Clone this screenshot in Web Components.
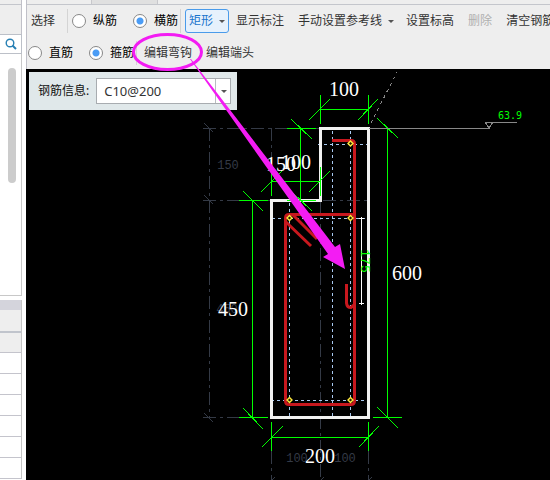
<!DOCTYPE html>
<html lang="zh-CN">
<head>
<meta charset="utf-8">
<title>钢筋编辑</title>
<style>
  html, body { margin: 0; height: 100%; }
  body { font: 12px/16px "Noto Sans", "Noto Sans CJK SC", sans-serif; color: #333; overflow: hidden; background: #fff; }
</style>
</head>
<body>
<rebar-app></rebar-app>
<script>
const define = (name, markup) => {
  const template = document.createElement('template');
  template.innerHTML = markup;
  customElements.define(name, class extends HTMLElement {
    constructor() {
      super();
      this.attachShadow({ mode: 'open' }).append(template.content.cloneNode(true));
    }
    connectedCallback() {
      const root = this.shadowRoot;
      const input = root.querySelector('input[type=radio]');
      if (input) input.checked = this.hasAttribute('checked');
      const button = root.querySelector('button');
      if (button && name === 'tool-button') button.disabled = this.hasAttribute('disabled');
    }
  });
};

define('tool-button', `
<style>
  :host { display: block; flex: none; }
  button { display: flex; align-items: center; gap: 6px; height: 24px; padding: 0; border: 0; background: none; font: inherit; color: #333; white-space: nowrap; }
  button:disabled { color: #b0b0b0; }
  i { display: none; border: 3px solid transparent; border-top-color: #555; border-bottom: 0; }
  :host([menu]) i { display: block; }
  :host([active]) button { color: #1874cd; background: #e6f1fc; border: 1px solid #4a9bea; border-radius: 3px; padding: 0 3px; }
</style>
<button type="button"><slot></slot><i></i></button>`);

define('tool-radio', `
<style>
  :host { display: block; flex: none; }
  label { display: flex; align-items: center; gap: 7px; color: #000; white-space: nowrap; }
  input { appearance: none; box-sizing: border-box; width: 14px; height: 14px; margin: 0; border: 1px solid #888; border-radius: 50%; background: #fff; }
  input:checked { background: radial-gradient(circle, #4a9cf5 0 3px, #fff 4px); }
</style>
<label><input type="radio"><span><slot></slot></span></label>`);

define('tool-divider', `
<style>:host { display: block; flex: none; width: 1px; height: 24px; background: #d4d4d4; }</style>`);

define('tool-bar', `
<style>
  :host { display: block; background: #eee; border-left: 1px solid #c0c0c8; height: 69px; overflow: hidden; }
  .tabs { height: 4px; border-bottom: 1px solid #c4c6cc; display: flex; }
  .tabs span { width: 65px; margin-left: 64px; background: #e0e0e0; border: 1px solid #c8c8cc; border-width: 0 1px; }
  .row { display: flex; align-items: center; height: 32px; }
  .first { padding-left: 4px; }
  .second { padding-left: 1px; }
  .g { margin-left: 14px; }
  .m { margin-left: 12px; }
  .s { margin-left: 4px; }
  .r { margin-left: 16px; }
  .t { margin-left: 2px; }
  .l { margin-left: 8px; }
  .k { margin-left: 7px; }
</style>
<div class="tabs"><span></span></div>
<div class="row first">
  <tool-button>选择</tool-button>
  <tool-divider class="m"></tool-divider>
  <tool-radio class="s">纵筋</tool-radio>
  <tool-radio class="r" checked>横筋</tool-radio>
  <tool-divider class="t"></tool-divider>
  <tool-button class="s" active menu>矩形</tool-button>
  <tool-button class="k">显示标注</tool-button>
  <tool-button class="g" menu>手动设置参考线</tool-button>
  <tool-button class="m">设置标高</tool-button>
  <tool-button class="g" disabled>删除</tool-button>
  <tool-button class="g">清空钢筋</tool-button>
</div>
<div class="row second">
  <tool-radio>直筋</tool-radio>
  <tool-radio class="r" checked>箍筋</tool-radio>
  <tool-divider class="t"></tool-divider>
  <tool-button class="k">编辑弯钩</tool-button>
  <tool-button class="g">编辑端头</tool-button>
</div>`);

define('side-panel', `
<style>
  :host { display: flex; flex-direction: column; width: 22px; margin-right: 4px; overflow: hidden; }
  :host > * { flex: none; }
  .top { background: #eee; border-right: 1px solid #c0c0c8; height: 34px; box-sizing: border-box; }
  .top::before { content: ""; display: block; height: 4px; border-bottom: 1px solid #c4c6cc; }
  .search { display: flex; align-items: center; justify-content: center; height: 20px; box-sizing: border-box; padding: 0; border: 1px solid #bcc0c8; border-left: 0; background: #fff; width: 100%; }
  .list { height: 242px; box-sizing: border-box; border: 1px solid #c8c8c8; border-left: 0; border-top: 0; padding: 14px 5px 0 8px; }
  .thumb { height: 115px; border-radius: 4px; background: #ccc; }
  table { border-collapse: separate; border-spacing: 0; margin-top: 4px; width: 100%; }
  td, th { padding: 0; box-sizing: border-box; height: 21px; border-bottom: 1px solid #c4c4cc; border-right: 1px solid #c4c4c4; }
  th { background: #eee; }
  .cap th { height: 10px; background: #d4d4dc; border-bottom: 0; }
  .one th { height: 23px; border-bottom: 2px solid #c0c4cc; }
  .two th { height: 20px; }
</style>
<div class="top"></div>
<button class="search" type="button" aria-label="搜索"><svg width="12" height="12" viewBox="0 0 12 12" fill="none" stroke="#2880b4"><circle cx="5" cy="5" r="3.8" stroke-width="1.4"/><path d="M7.5 7.5L11 11" stroke-width="2"/></svg></button>
<div class="list"><div class="thumb"></div></div>
<table>
  <thead><tr class="cap"><th></th></tr><tr class="one"><th></th></tr><tr class="two"><th></th></tr></thead>
  <tbody><tr><td></td></tr><tr><td></td></tr><tr><td></td></tr><tr><td></td></tr><tr><td></td></tr><tr><td></td></tr></tbody>
</table>`);

define('rebar-info', `
<style>
  :host { display: flex; align-items: center; gap: 7px; background: #e0e8ea; padding: 6px 6px 6px 9px; color: #111; }
  label { flex: none; }
  .combo { position: relative; display: grid; }
  select { appearance: none; box-sizing: border-box; width: 135px; height: 26px; margin: 0; padding: 0 16px 0 7px; border: 1px solid #a8acb0; border-radius: 0; color: #333; font: 13px/16px "Noto Sans", sans-serif;
    background: linear-gradient(#b8bcc0, #b8bcc0) right 14px top / 1px 100% no-repeat #fff; }
  i { position: absolute; right: 4px; top: 12px; border: 3px solid transparent; border-top-color: #555; border-bottom: 0; pointer-events: none; }
</style>
<label for="spec">钢筋信息:</label>
<div class="combo"><select id="spec" aria-label="钢筋信息"><option>C10@200</option></select><i></i></div>`);

define('section-drawing', `
<style>
  :host { display: block; }
  svg { display: block; }
  .crisp { shape-rendering: crispEdges; }
  .big { font: 20px "Liberation Serif", serif; fill: #fff; text-anchor: middle; }
  .ghost { font: 12px "Liberation Mono", monospace; fill: #343a46; text-anchor: middle; }
  .level { font: 10px "DejaVu Sans Mono", monospace; fill: #00ff00; }
  .turn { font: 13px "Liberation Mono", monospace; fill: #00ff00; text-anchor: middle; }
</style>
<svg width="524" height="411" viewBox="26 69 524 411" fill="none" role="img" aria-label="截面配筋图">
  <g class="crisp" stroke="#343a46" stroke-dasharray="13 4 3 4">
    <path d="M209.500 128V418M203 128.500H320M203 200.500H369M203 417.500H240M271.500 128V200M320.500 200V480M271.500 451V480M368.500 451V480"/>
    <path stroke-dasharray="none" d="M204 123l9 9M204 195l9 9M204 413l9 9M272 480l3-3M321 480l3-3M369 480l3-3"/>
  </g>
  <text class="ghost" x="228" y="169">150</text>
  <text class="ghost" x="227" y="313">450</text>
  <text class="ghost" x="297" y="462">100</text>
  <text class="ghost" x="345" y="462">100</text>
  <g class="crisp" stroke="#a8c8f0" stroke-dasharray="3 3">
    <path d="M332.500 131V417M350.500 131V417M289.500 203V417M318 144.500H369M272 218.500H370M271 400.500H368"/>
  </g>
  <path class="crisp" stroke="#f2f2f2" stroke-width="3" d="M320.500 128.500H368.500V417.500H271.500V200.500H320.500Z"/>
  <g class="crisp" stroke="#00ff00">
    <path d="M320 109.500H369M320.500 95V124M368.500 95V124M300.500 128V201M287 128.500H316M287 200.500H316M271 181.500H321M271.500 167V196M320.500 167V196M252.500 200V418M239 200.500H268M239 417.500H268M271 437.500H369M271.500 422V451M368.500 422V451M387.500 128V418M373 417.500H402"/>
    <path d="M309 120l21-21M358 120l20-21M291 119l21 20M291 191l21 20M261 192l21-21M309 192l21-21M243 191l20 20M243 408l20 21M262 447l21-21M359 447l20-21M377 407l21 21M377 118l21 20"/>
  </g>
  <path class="crisp" stroke="#888" d="M369 128.500H490M485 122.500H517M485 122l4 6 4-6"/>
  <path class="crisp" stroke="#888" stroke-dasharray="3 4" d="M371 123L397 72"/>
  <text class="level" x="498" y="119">63.9</text>
  <g stroke="#c8181e" stroke-width="3">
    <path d="M332 140.500H351Q354.500 140.500 354.500 144V401Q354.500 404.500 351 404.500H289Q285.500 404.500 285.500 401V218Q285.500 214.500 289 214.500H354M286 222L311 246M293 215L317 239M346.500 284V303Q347 307.500 351 307.500L354 305"/>
  </g>
  <g stroke="#ffe93c" stroke-width="1.400" fill="#221c00">
    <path d="M350.500 141l2.500 2.500-2.500 2.500-2.500-2.500zM289.500 215.500l2.500 2.500-2.500 2.500-2.500-2.500zM350.500 215.500l2.500 2.500-2.500 2.500-2.500-2.500zM289.500 397.500l2.500 2.500-2.500 2.500-2.500-2.500zM350.500 397.500l2.500 2.500-2.500 2.500-2.500-2.500z"/>
  </g>
  <path class="crisp" stroke="#fff" d="M361.500 217V305M359 218.500H364M359 303.500H364"/>
  <text class="turn" transform="translate(361 261) rotate(90)">175</text>
  <text class="big" x="344" y="96">100</text>
  <text class="big" x="281" y="171">150</text>
  <text class="big" x="296" y="169">100</text>
  <text class="big" x="407" y="280">600</text>
  <text class="big" x="233" y="316">450</text>
  <text class="big" x="320" y="463">200</text>
</svg>`);

define('callout-arrow', `
<style>
  :host { position: absolute; left: 0; top: 0; pointer-events: none; }
  svg { display: block; }
</style>
<svg width="550" height="480" viewBox="0 0 550 480" aria-hidden="true">
  <ellipse cx="167.500" cy="52" rx="34" ry="17.500" fill="none" stroke="#f31cf3" stroke-width="3"/>
  <path fill="#f31cf3" d="M190 59L191 59L335 247L340 244L345 269L323 257L328 254Z"/>
</svg>`);

define('rebar-app', `
<style>
  :host { display: flex; position: relative; height: 100vh; overflow: hidden; }
  side-panel { flex: none; }
  main { flex: 1; min-width: 0; display: flex; flex-direction: column; }
  tool-bar { flex: none; }
  .canvas { position: relative; flex: 1; min-height: 0; background: #000; overflow: hidden; }
  rebar-info { position: absolute; left: 3px; top: 3px; }
</style>
<side-panel></side-panel>
<main>
  <tool-bar></tool-bar>
  <div class="canvas"><section-drawing></section-drawing><rebar-info></rebar-info></div>
</main>
<callout-arrow></callout-arrow>`);
</script>
</body>
</html>
